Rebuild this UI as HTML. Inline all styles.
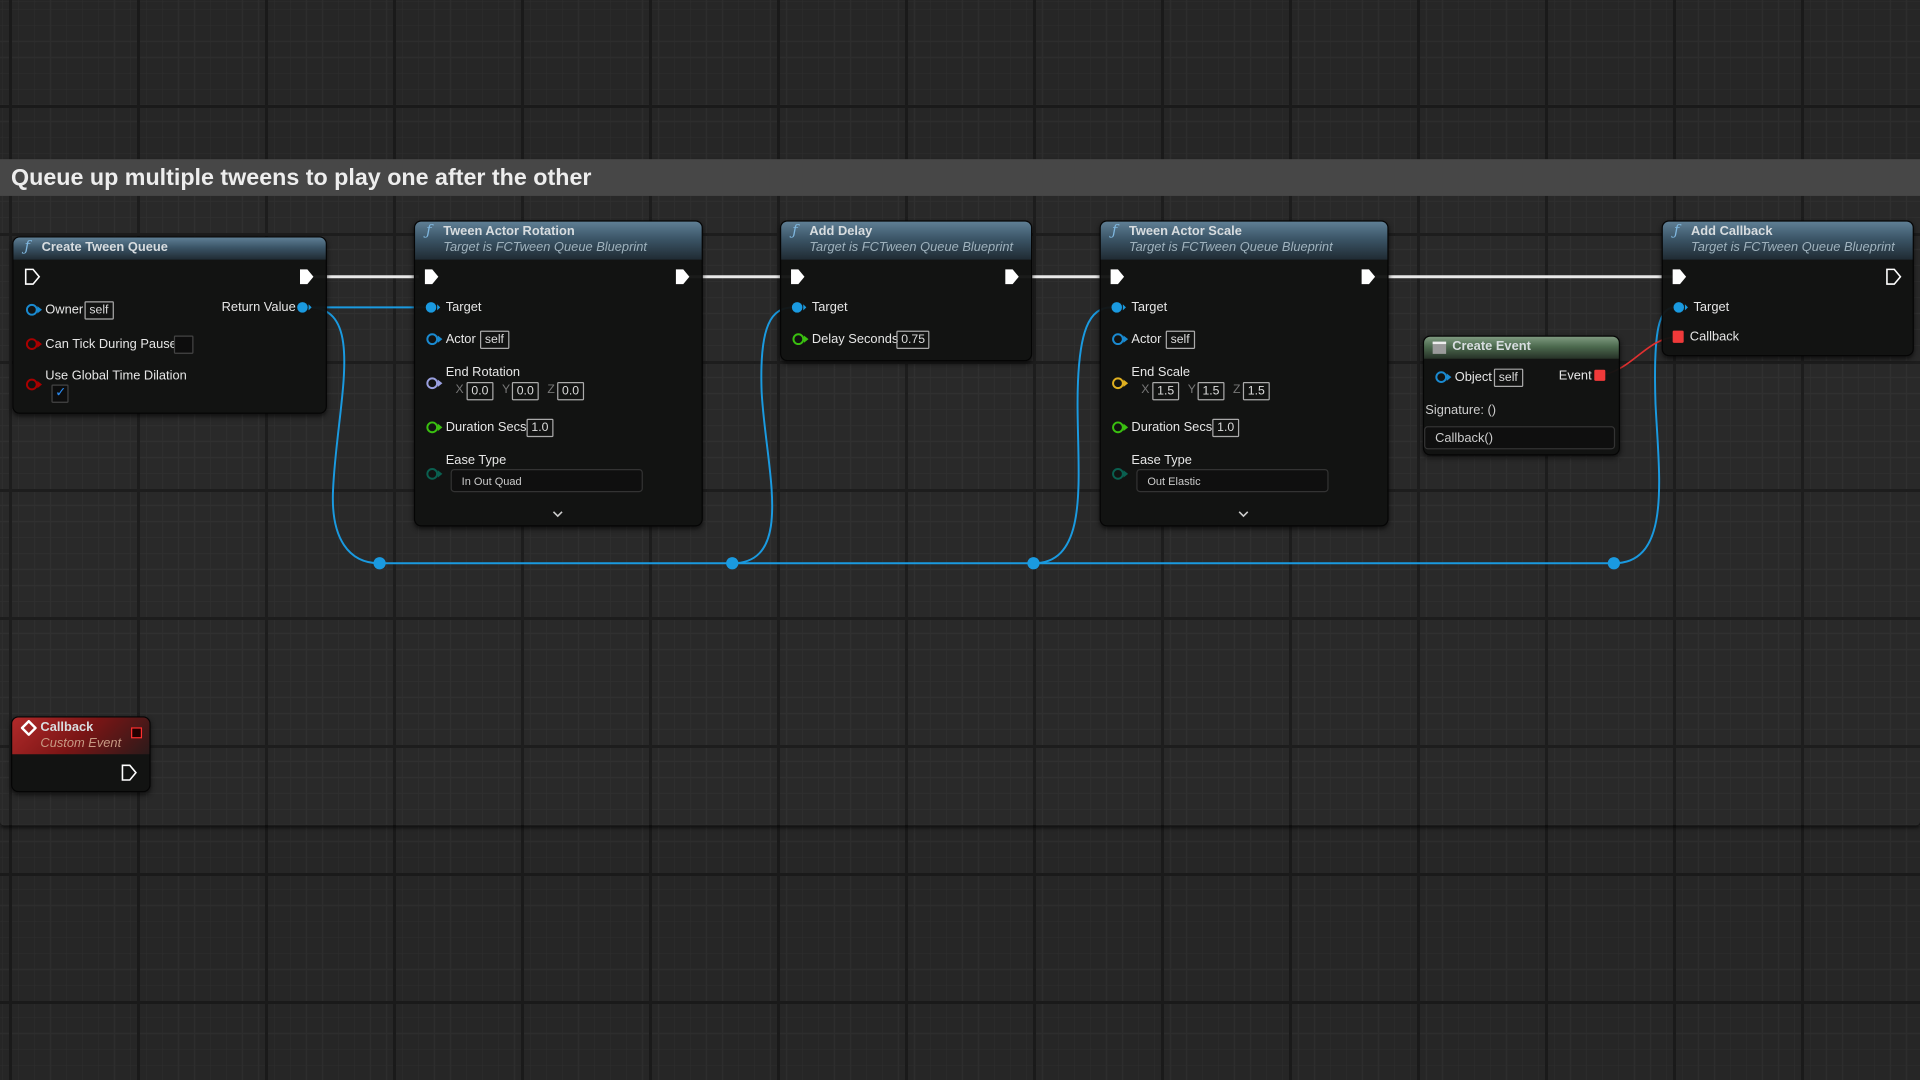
<!DOCTYPE html>
<html><head><meta charset="utf-8"><style>
html,body{margin:0;padding:0;width:1920px;height:1080px;overflow:hidden}
body{background-color:#262626;
background-image:
linear-gradient(#191919,#191919),linear-gradient(#191919,#191919),
repeating-linear-gradient(90deg,#2d2d2d 0 1px,transparent 1px 16px),
repeating-linear-gradient(0deg,#2d2d2d 0 1px,transparent 1px 16px);
background-size:0 0,0 0,auto,auto;background-position:2px 0,0 0,2px 0,0 2px;
font-family:"Liberation Sans",sans-serif;position:relative}
.vmaj{position:absolute;top:0;width:3px;height:1080px;background:#1a1a1a}
.hmaj{position:absolute;left:0;height:3px;width:1920px;background:#1a1a1a}
#stage{position:absolute;left:0;top:0;width:1568px;height:882px;transform:scale(1.22449);transform-origin:0 0}
.comment{position:absolute;left:0;top:130px;width:1568px;height:544px;background:rgba(255,255,255,0.015);box-shadow:0 2px 3px rgba(0,0,0,.6);border-radius:0 0 3px 3px}
.ctitle{position:absolute;left:0;top:130px;width:1568px;height:30px;background:#474747;color:#ededed;font-weight:bold;font-size:19px;line-height:31px;padding-left:9px;box-sizing:border-box}
.node{position:absolute;background:rgba(18,19,18,.96);border:1px solid #050505;border-radius:6px;box-shadow:0 2px 4px rgba(0,0,0,.6);color:#e6e6e6;font-size:10.5px}
.hdr{position:absolute;left:0;top:0;right:0;border-radius:5px 5px 0 0;background:linear-gradient(180deg,#5f7f95 0%,#3b5567 45%,#202b33 100%)}
.hdr .t{position:absolute;left:23px;top:2px;font-weight:bold;font-size:10.5px;color:#d8dde0}
.hdr .s{position:absolute;left:23px;top:15px;font-style:italic;font-size:10.5px;color:#9fb2bd}
.hdr .f{position:absolute;left:9px;top:0px;font-style:italic;font-family:"DejaVu Serif",serif;font-size:12px;color:#7fb7df}
.a{position:absolute;white-space:nowrap}
.box{position:absolute;border:1px solid #aaa;border-radius:1px;height:13px;line-height:13px;font-size:10px;padding:0 3px;color:#ddd}
.dd{position:absolute;border:1px solid #333;border-radius:3px;background:#0f0f0f;height:19px;line-height:19px;font-size:9px;color:#ccc;padding-left:8px;box-sizing:border-box}
svg.ov{position:absolute;left:0;top:0}
</style></head><body>
<div class="vmaj" style="left:9px"></div><div class="vmaj" style="left:137px"></div><div class="vmaj" style="left:265px"></div><div class="vmaj" style="left:393px"></div><div class="vmaj" style="left:521px"></div><div class="vmaj" style="left:649px"></div><div class="vmaj" style="left:777px"></div><div class="vmaj" style="left:905px"></div><div class="vmaj" style="left:1033px"></div><div class="vmaj" style="left:1161px"></div><div class="vmaj" style="left:1289px"></div><div class="vmaj" style="left:1417px"></div><div class="vmaj" style="left:1545px"></div><div class="vmaj" style="left:1673px"></div><div class="vmaj" style="left:1801px"></div>
<div class="hmaj" style="top:105px"></div><div class="hmaj" style="top:233px"></div><div class="hmaj" style="top:361px"></div><div class="hmaj" style="top:489px"></div><div class="hmaj" style="top:617px"></div><div class="hmaj" style="top:745px"></div><div class="hmaj" style="top:873px"></div><div class="hmaj" style="top:1001px"></div>
<div id="stage">
<div class="comment"></div>
<div class="ctitle">Queue up multiple tweens to play one after the other</div>

<svg class="ov" width="1568" height="882">
<g fill="none" stroke-width="2.5" stroke="#e8e8e8">
<path d="M256 226H342"/><path d="M562 226H646"/><path d="M831 226H907"/><path d="M1122 226H1366"/>
</g>
<g fill="none" stroke="#1a9ae0" stroke-width="1.6">
<path d="M252 251H348"/>
<path d="M252 251C300 251 275 330 272 400C270 440 285 460 310 460H1318"/>
<path d="M598 460C650 460 625 380 622 320C620 265 630 251 648 251"/>
<path d="M844 460C890 460 880 390 880 330C880 268 890 251 908 251"/>
<path d="M1318 460C1365 460 1355 390 1352 330C1350 268 1355 251 1368 251"/>
</g>
<path d="M1310 306C1335 300 1345 276 1370 275" fill="none" stroke="#e03030" stroke-width="1.4"/>
<g fill="#1a9ae0"><circle cx="310" cy="460" r="5"/><circle cx="598" cy="460" r="5"/><circle cx="844" cy="460" r="5"/><circle cx="1318" cy="460" r="5"/></g>
</svg>

<!-- Create Tween Queue -->
<div class="node" style="left:10px;top:193px;width:255px;height:143px">
<div class="hdr" style="height:18px"><span class="f">ƒ</span><span class="t">Create Tween Queue</span></div>
</div>
<!-- Tween Actor Rotation -->
<div class="node" style="left:338px;top:180px;width:234px;height:248px">
<div class="hdr" style="height:31px"><span class="f">ƒ</span><span class="t">Tween Actor Rotation</span><span class="s">Target is FCTween Queue Blueprint</span></div>
</div>
<div class="node" style="left:637px;top:180px;width:204px;height:113px">
<div class="hdr" style="height:31px"><span class="f">ƒ</span><span class="t">Add Delay</span><span class="s">Target is FCTween Queue Blueprint</span></div>
</div>
<div class="node" style="left:898px;top:180px;width:234px;height:248px">
<div class="hdr" style="height:31px"><span class="f">ƒ</span><span class="t">Tween Actor Scale</span><span class="s">Target is FCTween Queue Blueprint</span></div>
</div>
<div class="node" style="left:1357px;top:180px;width:204px;height:109px">
<div class="hdr" style="height:31px"><span class="f">ƒ</span><span class="t">Add Callback</span><span class="s">Target is FCTween Queue Blueprint</span></div>
</div>
<div class="node" style="left:1162px;top:274px;width:159px;height:96px">
<div class="hdr" style="height:18px;background:linear-gradient(180deg,#7f9a80 0%,#4c6a4e 45%,#263127 100%)"><span style="position:absolute;left:7px;top:4px;width:11px;height:10px;background:#9a9a9a;border-top:2px solid #eee;box-sizing:border-box"></span><span class="t">Create Event</span></div>
</div>
<div class="node" style="left:9px;top:585px;width:112px;height:60px">
<div class="hdr" style="height:30px;background:linear-gradient(135deg,#b22a2a 0%,#7a1515 50%,#2a1a1a 100%)"><span class="t" style="top:2px">Callback</span><span class="s" style="color:#c79a84">Custom Event</span>
<svg style="position:absolute;left:7px;top:2px" width="13" height="13"><path d="M6.5 1L12 6.5 6.5 12 1 6.5Z" fill="none" stroke="#fff" stroke-width="2"/></svg>
<span style="position:absolute;left:97px;top:8px;width:7px;height:7px;border:1.5px solid #ff3030;background:#200"></span></div>
</div>

<svg class="ov" width="1568" height="882">
<defs>
<path id="ex" d="M-5-6H1L6 0 1 6H-5Z"/>
<g id="dp"><circle r="4" fill="none" stroke-width="1.6"/><path d="M5-2L7.5 0 5 2Z"/></g>
<g id="df"><circle r="4.3"/><path d="M5-2.5L7.5 0 5 2.5Z"/></g>
</defs>
<g fill="#fff"><use href="#ex" x="250" y="226"/><use href="#ex" x="352" y="226"/><use href="#ex" x="557" y="226"/><use href="#ex" x="651" y="226"/><use href="#ex" x="826" y="226"/><use href="#ex" x="912" y="226"/><use href="#ex" x="1117" y="226"/><use href="#ex" x="1371" y="226"/></g>
<g fill="none" stroke="#fff" stroke-width="1.3"><use href="#ex" x="26" y="226"/><use href="#ex" x="1546" y="226"/><use href="#ex" x="105" y="631"/></g>
<g fill="#1a9ae0"><use href="#df" x="247" y="251"/><use href="#df" x="352" y="251"/><use href="#df" x="651" y="251"/><use href="#df" x="912" y="251"/><use href="#df" x="1371" y="251"/></g>
<g stroke="#1a8ad0" fill="#1a8ad0"><use href="#dp" x="26" y="253"/><use href="#dp" x="353" y="277"/><use href="#dp" x="913" y="277"/><use href="#dp" x="1177" y="308"/></g>
<g stroke="#a00" fill="#a00"><use href="#dp" x="26" y="281"/><use href="#dp" x="26" y="314"/></g>
<g stroke="#9aa0e0" fill="#9aa0e0"><use href="#dp" x="353" y="313"/></g>
<g stroke="#e0b020" fill="#e0b020"><use href="#dp" x="913" y="313"/></g>
<g stroke="#3ac010" fill="#3ac010"><use href="#dp" x="353" y="349"/><use href="#dp" x="652" y="277"/><use href="#dp" x="913" y="349"/></g>
<g stroke="#0a6050" fill="#0a6050"><use href="#dp" x="353" y="387"/><use href="#dp" x="913" y="387"/></g>
<rect x="1302" y="302" width="9" height="9" fill="#f03a3a" rx="1"/>
<rect x="1366" y="270" width="9" height="10" fill="#f03a3a" rx="1"/>
<g fill="none" stroke="#ccc" stroke-width="1.3"><path d="M504 391l3.5 3.5 3.5-3.5"/><path d="M452 418l3.5 3.5 3.5-3.5"/><path d="M1064 391l3.5 3.5 3.5-3.5"/><path d="M1012 418l3.5 3.5 3.5-3.5"/><path d="M1299 356l3.5 3.5 3.5-3.5"/></g>
</svg>

<!-- labels -->
<span class="a" style="left:37px;top:247px;font-size:10.5px;color:#e6e6e6">Owner</span><span class="box" style="left:69px;top:246px">self</span>
<span class="a" style="left:181px;top:245px;font-size:10.5px;color:#e6e6e6">Return Value</span>
<span class="a" style="left:37px;top:275px;font-size:10.5px;color:#e6e6e6">Can Tick During Pause</span><span class="box" style="left:142px;top:274px;width:8px;border-color:#444;background:#0d0d0d"></span>
<span class="a" style="left:37px;top:301px;font-size:10.5px;color:#e6e6e6">Use Global Time Dilation</span>
<span class="box" style="left:42px;top:314px;width:8px;border-color:#444;background:#0d0d0d;color:#2a8af0;font-size:11px;padding:0 2px;line-height:12px">✓</span>

<span class="a" style="left:364px;top:245px;font-size:10.5px;color:#e6e6e6">Target</span>
<span class="a" style="left:364px;top:271px;font-size:10.5px;color:#e6e6e6">Actor</span><span class="box" style="left:392px;top:270px">self</span>
<span class="a" style="left:364px;top:298px;font-size:10.5px;color:#e6e6e6">End Rotation</span>
<span class="a" style="left:372px;top:313px;font-size:10px;color:#777">X</span><span class="box" style="left:381px;top:312px">0.0</span>
<span class="a" style="left:410px;top:313px;font-size:10px;color:#777">Y</span><span class="box" style="left:418px;top:312px">0.0</span>
<span class="a" style="left:447px;top:313px;font-size:10px;color:#777">Z</span><span class="box" style="left:455px;top:312px">0.0</span>
<span class="a" style="left:364px;top:343px;font-size:10.5px;color:#e6e6e6">Duration Secs</span><span class="box" style="left:430px;top:342px">1.0</span>
<span class="a" style="left:364px;top:370px;font-size:10.5px;color:#e6e6e6">Ease Type</span>
<div class="dd" style="left:368px;top:383px;width:157px">In Out Quad</div>

<span class="a" style="left:663px;top:245px;font-size:10.5px;color:#e6e6e6">Target</span>
<span class="a" style="left:663px;top:271px;font-size:10.5px;color:#e6e6e6">Delay Seconds</span><span class="box" style="left:732px;top:270px">0.75</span>

<span class="a" style="left:924px;top:245px;font-size:10.5px;color:#e6e6e6">Target</span>
<span class="a" style="left:924px;top:271px;font-size:10.5px;color:#e6e6e6">Actor</span><span class="box" style="left:952px;top:270px">self</span>
<span class="a" style="left:924px;top:298px;font-size:10.5px;color:#e6e6e6">End Scale</span>
<span class="a" style="left:932px;top:313px;font-size:10px;color:#777">X</span><span class="box" style="left:941px;top:312px">1.5</span>
<span class="a" style="left:970px;top:313px;font-size:10px;color:#777">Y</span><span class="box" style="left:978px;top:312px">1.5</span>
<span class="a" style="left:1007px;top:313px;font-size:10px;color:#777">Z</span><span class="box" style="left:1015px;top:312px">1.5</span>
<span class="a" style="left:924px;top:343px;font-size:10.5px;color:#e6e6e6">Duration Secs</span><span class="box" style="left:990px;top:342px">1.0</span>
<span class="a" style="left:924px;top:370px;font-size:10.5px;color:#e6e6e6">Ease Type</span>
<div class="dd" style="left:928px;top:383px;width:157px">Out Elastic</div>

<span class="a" style="left:1188px;top:302px;font-size:10.5px;color:#e6e6e6">Object</span><span class="box" style="left:1220px;top:301px">self</span>
<span class="a" style="left:1273px;top:301px;font-size:10.5px;color:#e6e6e6">Event</span>
<span class="a" style="left:1164px;top:329px;font-size:10.5px;color:#ccc">Signature: ()</span>
<div class="dd" style="left:1163px;top:348px;width:156px;font-size:10.5px">Callback()</div>

<span class="a" style="left:1383px;top:245px;font-size:10.5px;color:#e6e6e6">Target</span>
<span class="a" style="left:1380px;top:269px;font-size:10.5px;color:#e6e6e6">Callback</span>
</div>
</body></html>
